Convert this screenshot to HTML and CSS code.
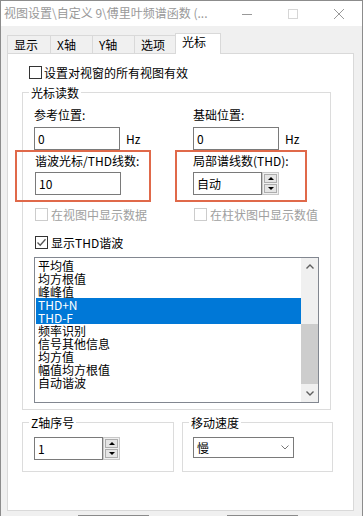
FILE: index.html
```html
<!DOCTYPE html>
<html lang="zh-CN">
<head>
    <meta charset="UTF-8">
    <meta name="viewport" content="width=device-width, initial-scale=1.0">
    <title>视图设置</title>
    <link rel="stylesheet" href="styles.css">
</head>
<body>
    <div class="window">
        <div class="titlebar">
            <span class="title">视图设置\自定义 9\傅里叶频谱函数 (...</span>
            <div class="caption-buttons">
                <span class="cap-btn">
                    <svg width="10" height="10" viewBox="0 0 10 10"><line x1="0" y1="5.5" x2="10" y2="5.5" stroke="#999" stroke-width="1"/></svg>
                </span>
                <span class="cap-btn">
                    <svg width="10" height="10" viewBox="0 0 10 10"><rect x="0.5" y="0.5" width="9" height="9" fill="none" stroke="#d6d6d6" stroke-width="1"/></svg>
                </span>
                <span class="cap-btn">
                    <svg width="10" height="10" viewBox="0 0 10 10"><path d="M0 0 L10 10 M10 0 L0 10" stroke="#999" stroke-width="1"/></svg>
                </span>
            </div>
        </div>

        <div class="client">
            <div class="tabs">
                <div class="tab tab-show">显示</div>
                <div class="tab tab-x">X轴</div>
                <div class="tab tab-y">Y轴</div>
                <div class="tab tab-opt">选项</div>
                <div class="tab tab-cursor active">光标</div>
            </div>

            <div class="panel">
                <label class="check check-top">
                    <span class="box"></span>
                    <span>设置对视窗的所有视图有效</span>
                </label>

                <div class="group group-main">
                    <span class="group-title">光标读数</span>
                    <div class="group-body">
                        <div class="pair">
                            <div class="col">
                                <div class="field">
                                    <div class="label">参考位置:</div>
                                    <div class="input-row">
                                        <div class="edit">0</div>
                                        <span class="unit">Hz</span>
                                    </div>
                                </div>
                                <div class="marked marked-left">
                                    <div class="label">谐波光标/THD线数:</div>
                                    <div class="edit edit-marked">10</div>
                                </div>
                                <label class="check disabled">
                                    <span class="box"></span>
                                    <span>在视图中显示数据</span>
                                </label>
                            </div>
                            <div class="col">
                                <div class="field">
                                    <div class="label">基础位置:</div>
                                    <div class="input-row">
                                        <div class="edit">0</div>
                                        <span class="unit">Hz</span>
                                    </div>
                                </div>
                                <div class="marked marked-right">
                                    <div class="label">局部谱线数(THD):</div>
                                    <div class="spin spin-marked">
                                        <div class="spin-edit">自动</div>
                                        <div class="spin-btns">
                                            <span class="spin-btn"><i class="tri-up"></i></span>
                                            <span class="spin-btn"><i class="tri-down"></i></span>
                                        </div>
                                    </div>
                                </div>
                                <label class="check disabled">
                                    <span class="box"></span>
                                    <span>在柱状图中显示数值</span>
                                </label>
                            </div>
                        </div>

                        <label class="check check-thd">
                            <span class="box checked">
                                <svg width="11" height="11" viewBox="0 0 11 11"><path d="M1.5 5.5 L4.2 8.3 L9.5 2.2" fill="none" stroke="#555" stroke-width="1.3"/></svg>
                            </span>
                            <span>显示THD谐波</span>
                        </label>

                        <div class="listbox">
                            <ul class="items">
                                <li>平均值</li>
                                <li>均方根值</li>
                                <li>峰峰值</li>
                                <li class="sel">THD+N</li>
                                <li class="sel">THD-F</li>
                                <li>频率识别</li>
                                <li>信号其他信息</li>
                                <li>均方值</li>
                                <li>幅值均方根值</li>
                                <li>自动谐波</li>
                            </ul>
                            <div class="vscroll">
                                <div class="sb-arrow">
                                    <svg width="8" height="5" viewBox="0 0 8 5"><path d="M0.5 4.5 L4 1 L7.5 4.5" fill="none" stroke="#606060" stroke-width="1.4"/></svg>
                                </div>
                                <div class="sb-track"><div class="sb-thumb"></div></div>
                                <div class="sb-arrow">
                                    <svg width="8" height="5" viewBox="0 0 8 5"><path d="M0.5 0.5 L4 4 L7.5 0.5" fill="none" stroke="#606060" stroke-width="1.4"/></svg>
                                </div>
                            </div>
                        </div>
                    </div>
                </div>

                <div class="groups-row">
                    <div class="group group-small group-z">
                        <span class="group-title">Z轴序号</span>
                        <div class="group-body">
                            <div class="spin">
                                <div class="spin-edit">1</div>
                                <div class="spin-btns">
                                    <span class="spin-btn"><i class="tri-up"></i></span>
                                    <span class="spin-btn"><i class="tri-down"></i></span>
                                </div>
                            </div>
                        </div>
                    </div>
                    <div class="group group-small group-speed">
                        <span class="group-title">移动速度</span>
                        <div class="group-body">
                            <div class="combo">
                                <span>慢</span>
                                <svg width="8" height="5" viewBox="0 0 8 5"><path d="M0.5 0.5 L4 4 L7.5 0.5" fill="none" stroke="#777" stroke-width="1"/></svg>
                            </div>
                        </div>
                    </div>
                </div>
            </div>

            <div class="footer">
                <span class="btn"></span>
                <span class="btn"></span>
            </div>
        </div>
    </div>
</body>
</html>
```

FILE: styles.css
```css
* {
    box-sizing: border-box;
}
body {
    margin: 0;
    font-family: "Noto Sans CJK SC", sans-serif;
    font-size: 12px;
    line-height: 14px;
    color: #000;
    background: #f0f0f0;
}
.window {
    width: 363px;
    height: 516px;
    border: 1px solid #8c8c8c;
    border-bottom: none;
    background: #f0f0f0;
    overflow: hidden;
}

/* title bar */
.titlebar {
    height: 25px;
    background: #fff;
    display: flex;
}
.title {
    padding: 5px 0 0 3px;
    color: #999;
    white-space: nowrap;
}
.caption-buttons {
    margin-left: auto;
    display: flex;
}
.cap-btn {
    width: 46px;
    height: 25px;
    display: flex;
    align-items: center;
    justify-content: center;
}

/* tabs */
.client {
    padding: 7px 0 0 6px;
}
.tabs {
    display: flex;
    align-items: flex-end;
    height: 20px;
}
.tab {
    height: 18px;
    padding: 2px 0 0 6px;
    border: 1px solid #d9d9d9;
    border-bottom: none;
    margin-left: -1px;
    background: #f0f0f0;
    white-space: nowrap;
}
.tab-show { width: 44px; margin-left: 0; }
.tab-x { width: 43px; }
.tab-y { width: 43px; }
.tab-opt { width: 42px; }
.tab-cursor { width: 46px; }
.tab.active {
    height: 21px;
    padding-top: 1px;
    margin-bottom: -1px;
    background: #fff;
    position: relative;
    z-index: 1;
}

.panel {
    width: 347px;
    height: 458px;
    border: 1px solid #d9d9d9;
    background: #fff;
    padding: 12px 0 0 14px;
}

/* checkboxes */
.check {
    display: flex;
    align-items: center;
    gap: 2px;
    height: 13px;
    white-space: nowrap;
}
.box {
    width: 13px;
    height: 13px;
    border: 1px solid #333;
    background: #fff;
    flex: none;
    display: flex;
    align-items: center;
    justify-content: center;
}
.check-top {
    margin-left: 7px;
}
.check.disabled {
    color: #a0a0a0;
    margin: 6px 0 0 1px;
    gap: 3px;
}
.check.disabled .box {
    border-color: #cccccc;
}
.check-thd {
    margin: 15px 0 0 1px;
    gap: 3px;
}

/* group boxes */
.group {
    border: 1px solid #dcdcdc;
}
.group-title {
    display: block;
    width: fit-content;
    margin: -7px 0 0 6px;
    padding: 0 2px;
    background: #fff;
    white-space: nowrap;
}
.group-main {
    width: 309px;
    margin-top: 13px;
}
.group-body {
    padding: 0 0 6px 11px;
}
.pair {
    display: grid;
    grid-template-columns: 159px 1fr;
}
.field {
    padding-top: 8px;
}
.input-row {
    display: flex;
    align-items: center;
    gap: 6px;
    margin-top: 5px;
}
.edit {
    width: 86px;
    height: 23px;
    border: 1px solid #7a7a7a;
    padding: 4px 0 0 3px;
    background: #fff;
}

/* annotation boxes */
.marked {
    border: 2px solid #e0694a;
    padding: 2px 0 5px 0;
}
.marked-left {
    width: 136px;
    margin-left: -19px;
    padding-left: 18px;
}
.marked-right {
    width: 132px;
    margin-left: -18px;
    padding-left: 16px;
}
.edit-marked {
    margin-top: 4px;
}

/* spin boxes */
.spin {
    display: flex;
    width: 86px;
    height: 23px;
}
.spin-marked {
    margin-top: 4px;
}
.spin-edit {
    width: 69px;
    border: 1px solid #7a7a7a;
    padding: 4px 0 0 3px;
    background: #fff;
}
.spin-btns {
    width: 17px;
    border: 1px solid #c8c8c8;
    background: #f0f0f0;
    padding: 1px;
    display: flex;
    flex-direction: column;
    gap: 1px;
}
.spin-btn {
    flex: 1;
    border: 1px solid #adadad;
    background: #e5e5e5;
    display: flex;
    align-items: center;
    justify-content: center;
}
.tri-up {
    border-left: 3px solid transparent;
    border-right: 3px solid transparent;
    border-bottom: 3px solid #000;
}
.tri-down {
    border-left: 3px solid transparent;
    border-right: 3px solid transparent;
    border-top: 3px solid #000;
}

/* list box */
.listbox {
    display: flex;
    width: 285px;
    height: 146px;
    margin-top: 8px;
    border: 1px solid #828790;
    background: #fff;
}
.items {
    flex: 1;
    margin: 0;
    padding: 1px 0 0 1px;
    list-style: none;
}
.items li {
    height: 13px;
    line-height: 13px;
    padding-left: 2px;
    white-space: nowrap;
}
.items li.sel {
    background: #0078d7;
    color: #fff;
}
.vscroll {
    width: 17px;
    display: flex;
    flex-direction: column;
    background: #f0f0f0;
}
.sb-arrow {
    height: 17px;
    display: flex;
    align-items: center;
    justify-content: center;
}
.sb-track {
    flex: 1;
}
.sb-thumb {
    height: 60px;
    margin-top: 49px;
    background: #cdcdcd;
}

/* bottom groups */
.groups-row {
    display: flex;
    gap: 8px;
    margin-top: 12px;
}
.group-small {
    height: 50px;
}
.group-z {
    width: 152px;
}
.group-speed {
    width: 151px;
}
.group-small .group-body {
    padding: 7px 0 0 11px;
}
.group-speed .group-body {
    padding-left: 10px;
}
.combo {
    width: 101px;
    height: 21px;
    border: 1px solid #7a7a7a;
    padding: 0 4px 0 3px;
    display: flex;
    align-items: center;
    justify-content: space-between;
    background: #fff;
}

/* dialog buttons, mostly off screen */
.footer {
    display: flex;
    gap: 78px;
    margin-top: 4px;
    padding-left: 71px;
}
.btn {
    width: 71px;
    height: 23px;
    border: 1px solid #8a8a8a;
    background: #e1e1e1;
}
```
